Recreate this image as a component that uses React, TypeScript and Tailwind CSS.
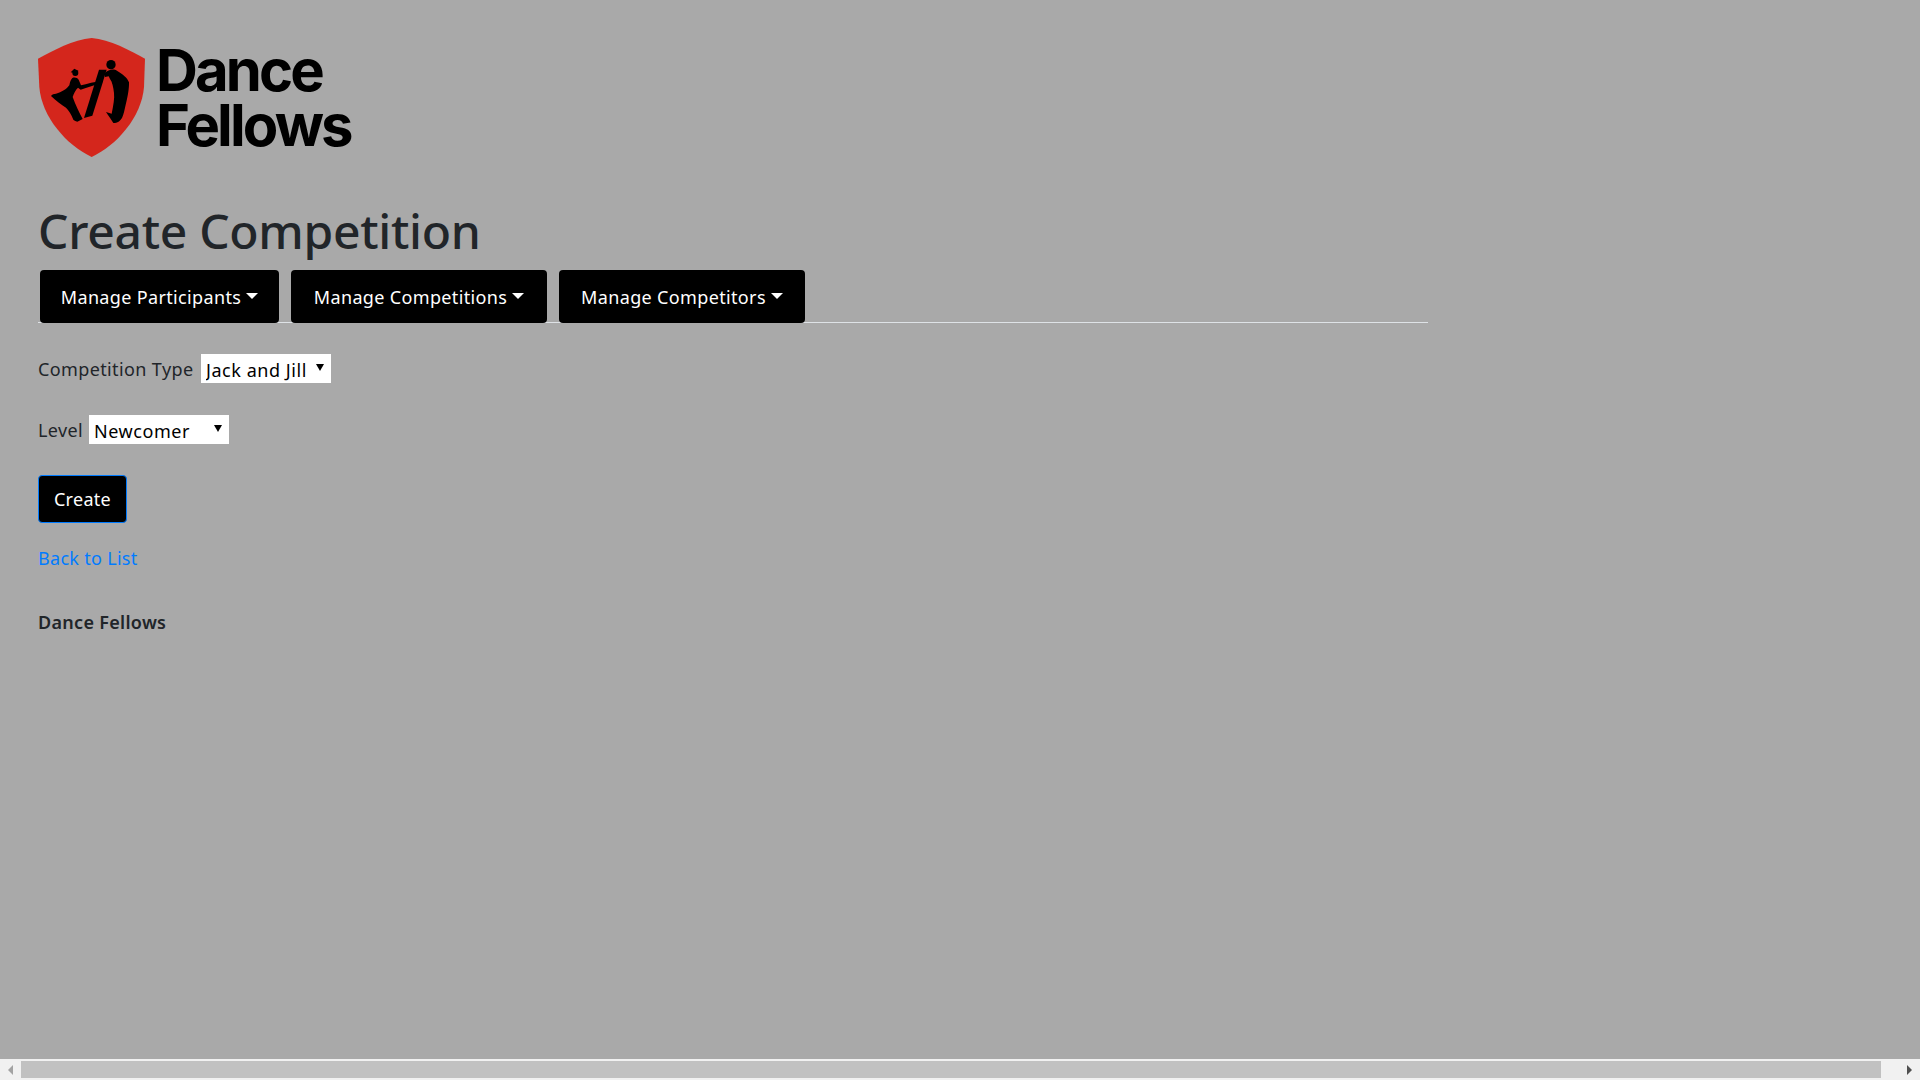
const sans = "font-['Noto_Sans','Open_Sans',sans-serif]";

function Logo() {
  return (
    <div className="flex items-center gap-[11px] h-[119px]">
      <svg width="107" height="119" viewBox="24 23 321 357" className="block shrink-0">
        <path d="M185 23C130 28 70 60 24 85L28 170C35 260 110 345 185 380C260 345 335 260 342 170L345 85C300 60 240 28 185 23Z" fill="#d4261c" />
        <circle cx="243" cy="103" r="14" fill="#000" />
        <circle cx="136" cy="128" r="9" fill="#000" />
        <path d="M122 126L133 115L146 122L134 128Z" fill="#000" />
        <path d="M207 118L230 118L187 256L162 263Z" fill="#000" />
        <path d="M225 128C235 118 250 114 262 122C278 132 292 142 297 156C298 175 292 205 285 232C281 250 278 262 272 268C266 276 256 278 250 278C244 268 236 258 228 245L245 250C250 225 254 205 252 188C250 170 247 155 240 146L236 138L225 140Z" fill="#000" />
        <path d="M127 143C134 140 142 142 146 148L153 165C170 160 195 154 218 151L216 157C195 163 172 172 152 178L144 172C137 178 132 188 128 200C136 222 148 248 158 266L142 274C136 272 132 270 130 268C124 252 116 240 108 232C96 224 78 212 63 197C66 192 72 190 78 190C95 186 110 176 118 165C120 155 122 148 127 143Z" fill="#000" />
      </svg>
      <div className="font-['Inter',sans-serif] font-bold text-[58px] leading-[55px] tracking-[-2.9px] text-black">
        Dance
        <br />
        Fellows
      </div>
    </div>
  );
}

function NavButton({ label, width }: { label: string; width: string }) {
  return (
    <button className={`${width} h-[53px] pt-[1px] bg-black text-white rounded-[4px] flex items-center justify-center gap-[5px] text-[18px] tracking-[0.35px]`}>
      <span>{label}</span>
      <span className="w-0 h-0 border-x-[6px] border-x-transparent border-t-[6px] border-t-white mb-[3px]" />
    </button>
  );
}

function Select({ value, width }: { value: string; width: string }) {
  return (
    <div className={`relative ${width} h-[29px] bg-white`}>
      <select defaultValue={value} className="appearance-none w-full h-full bg-transparent pl-[5px] pt-[2px] text-[18px] leading-[29px] tracking-[0.55px] text-black outline-none">
        <option>{value}</option>
      </select>
      <span className="absolute right-[7px] top-[10px] w-0 h-0 border-x-[4px] border-x-transparent border-t-[7px] border-t-black" />
    </div>
  );
}

export default function App() {
  return (
    <div className={`${sans} h-screen w-screen overflow-hidden bg-[#a9a9a9] flex flex-col text-[#212529]`}>
      <main className="flex-1 pl-[38px] pt-[38px]">
        <Logo />
        <h1 className="mt-[45px] text-[48px] leading-[58px] font-medium tracking-[-0.3px] text-[#212529]">Create Competition</h1>
        <nav className="w-[1390px] h-[53px] mt-[10px] pl-[2px] flex gap-[12px] border-b border-[#dee2e6]">
          <NavButton label="Manage Participants" width="w-[239px]" />
          <NavButton label="Manage Competitions" width="w-[256px]" />
          <NavButton label="Manage Competitors" width="w-[246px]" />
        </nav>
        <div className="mt-[31px] flex items-center h-[29px] text-[18px] tracking-[0.38px]">
          <label className="w-[163px] pt-[2px]">Competition Type</label>
          <Select value="Jack and Jill" width="w-[130px]" />
        </div>
        <div className="mt-[32px] flex items-center h-[29px] text-[18px] tracking-[0.38px]">
          <label className="w-[51px] pt-[2px]">Level</label>
          <Select value="Newcomer" width="w-[140px]" />
        </div>
        <button className="mt-[31px] w-[89px] h-[48px] block bg-black text-white border border-[#007bff] rounded-[4px] text-[18px] tracking-[0.3px]">Create</button>
        <a href="#" className="block mt-[22px] h-[27px] leading-[27px] text-[18px] tracking-[0.3px] text-[#007bff]">Back to List</a>
        <div className="mt-[37px] h-[27px] leading-[27px] text-[18px] font-semibold tracking-[0.3px] text-[#212529]">Dance Fellows</div>
      </main>
      <div className="h-[21px] bg-[#f1f1f1] flex items-center shrink-0">
        <div className="w-[21px] flex justify-center">
          <span className="w-0 h-0 border-y-[5px] border-y-transparent border-r-[5px] border-r-[#a3a3a3]" />
        </div>
        <div className="flex-1 h-[17px] bg-[#c1c1c1]" />
        <div className="w-[39px] flex justify-end pr-[8px]">
          <span className="w-0 h-0 border-y-[5px] border-y-transparent border-l-[5px] border-l-[#505050]" />
        </div>
      </div>
    </div>
  );
}
